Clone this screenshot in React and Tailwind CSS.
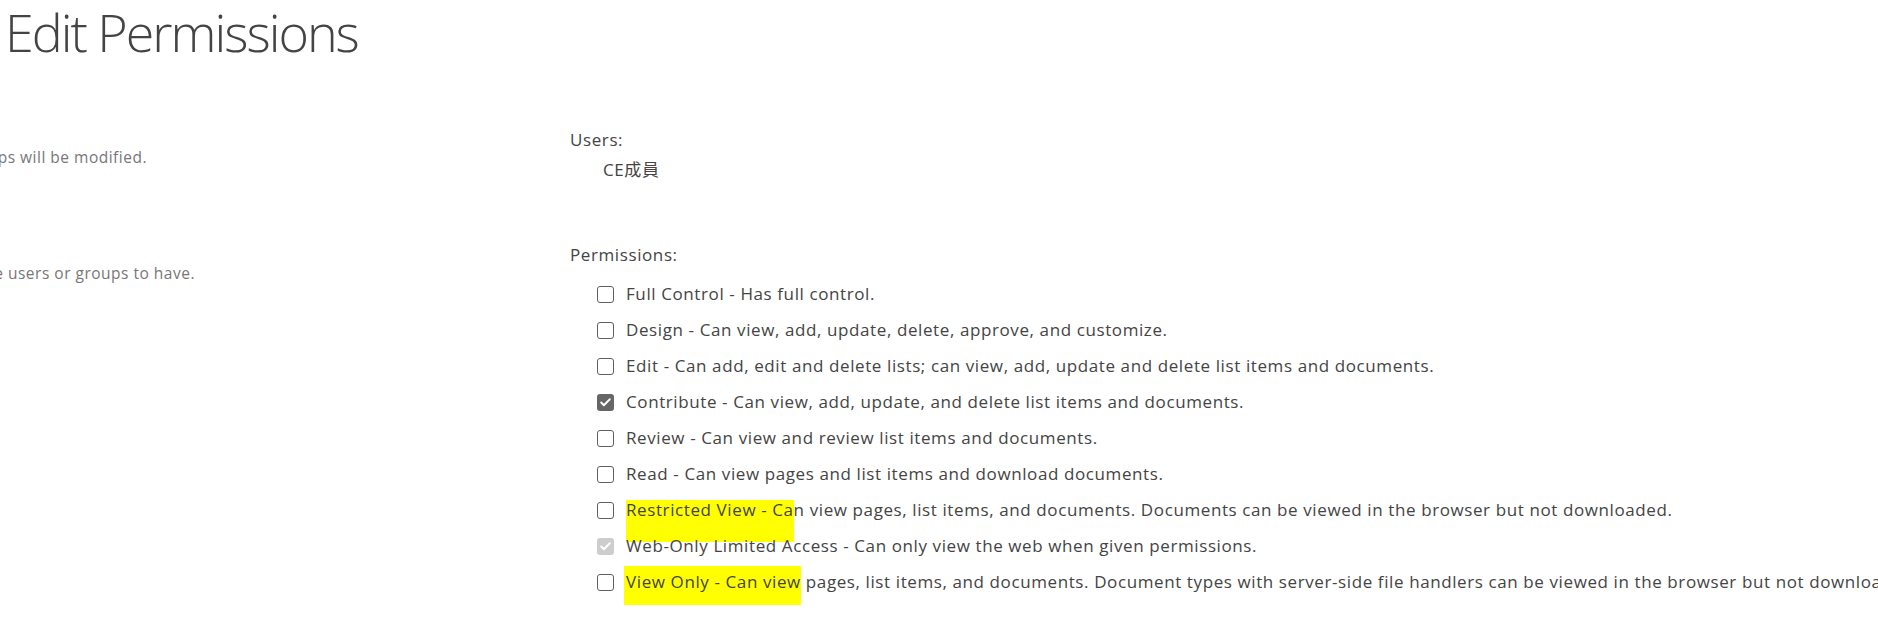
import { Check } from "lucide-react";

const permissions = [
  { name: "Full Control", desc: "Has full control." },
  { name: "Design", desc: "Can view, add, update, delete, approve, and customize." },
  { name: "Edit", desc: "Can add, edit and delete lists; can view, add, update and delete list items and documents." },
  { name: "Contribute", desc: "Can view, add, update, and delete list items and documents.", checked: true },
  { name: "Review", desc: "Can view and review list items and documents." },
  { name: "Read", desc: "Can view pages and list items and download documents." },
  {
    name: "Restricted View",
    desc: "Can view pages, list items, and documents. Documents can be viewed in the browser but not downloaded.",
    mark: "restricted",
  },
  { name: "Web-Only Limited Access", desc: "Can only view the web when given permissions.", checked: true, disabled: true },
  {
    name: "View Only",
    desc: "Can view pages, list items, and documents. Document types with server-side file handlers can be viewed in the browser but not downloaded.",
    mark: "viewonly",
  },
];

function CheckBox({ checked, disabled }) {
  if (checked) {
    return (
      <span
        className={`flex h-[17px] w-[17px] shrink-0 items-center justify-center rounded-[3px] ${
          disabled ? "bg-[#cdcdcd]" : "bg-[#666666]"
        }`}
      >
        <Check className="h-[13px] w-[13px] text-white" strokeWidth={3.5} />
      </span>
    );
  }
  return <span className="h-[17px] w-[17px] shrink-0 rounded-[3px] border-[1.5px] border-[#5f5f5f] bg-white" />;
}

function PermissionRow({ item }) {
  return (
    <div className="relative flex h-[36px] items-center gap-[12px] pl-[27px] whitespace-nowrap">
      {/* yellow marker strokes over the two read-only levels */}
      {item.mark === "restricted" && (
        <div className="absolute left-[56px] top-[8px] h-[42px] w-[168px] bg-[#ffff00]" />
      )}
      {item.mark === "viewonly" && (
        <div className="absolute left-[54px] top-[2px] h-[39px] w-[177px] bg-[#ffff00]" />
      )}
      <CheckBox checked={item.checked} disabled={item.disabled} />
      <label className="relative z-10">
        {item.name} - {item.desc}
      </label>
    </div>
  );
}

export default function App() {
  return (
    <div
      className="relative h-[627px] w-[1878px] overflow-hidden bg-white text-[#444444]"
      style={{ fontFamily: '"Open Sans", "Noto Sans CJK TC", sans-serif' }}
    >
      <h1 className="pl-[5px] pt-[2px] text-[52px] font-light leading-[60px] tracking-[-2px] text-[#444444]">
        Edit Permissions
      </h1>

      <div className="mt-[63px] grid grid-cols-[570px_1fr]">
        {/* section descriptions, page scrolled so their start is off-screen */}
        <div className="text-[15.5px] leading-[20px] tracking-[0.5px] text-[#777777]">
          <div className="mt-[22px] flex w-[147px] justify-end overflow-hidden whitespace-nowrap">
            The permissions of these users or groups will be modified.
          </div>
          <div className="mt-[96px] flex w-[195px] justify-end overflow-hidden whitespace-nowrap">
            Choose the permissions you want these users or groups to have.
          </div>
        </div>

        <div className="text-[17px] tracking-[0.6px]">
          <div className="leading-[30px]">Users:</div>
          <div className="pl-[33px] leading-[30px]">CE成員</div>
          <div className="mt-[55px] leading-[30px]">Permissions:</div>
          <div className="mt-[6px]">
            {permissions.map((p) => (
              <PermissionRow key={p.name} item={p} />
            ))}
          </div>
        </div>
      </div>

      {/* site watermark */}
      <div className="pointer-events-none absolute left-[1739px] top-[579px] flex items-start gap-[4px] opacity-80">
        <div className="h-[50px] w-[50px] rounded-full bg-white/70" />
        <div className="flex flex-col leading-none text-white">
          <span className="text-[17px] font-bold tracking-[2px]">路由器</span>
          <span className="mt-[12px] text-[13px]">luyouqi.com</span>
        </div>
      </div>
    </div>
  );
}
